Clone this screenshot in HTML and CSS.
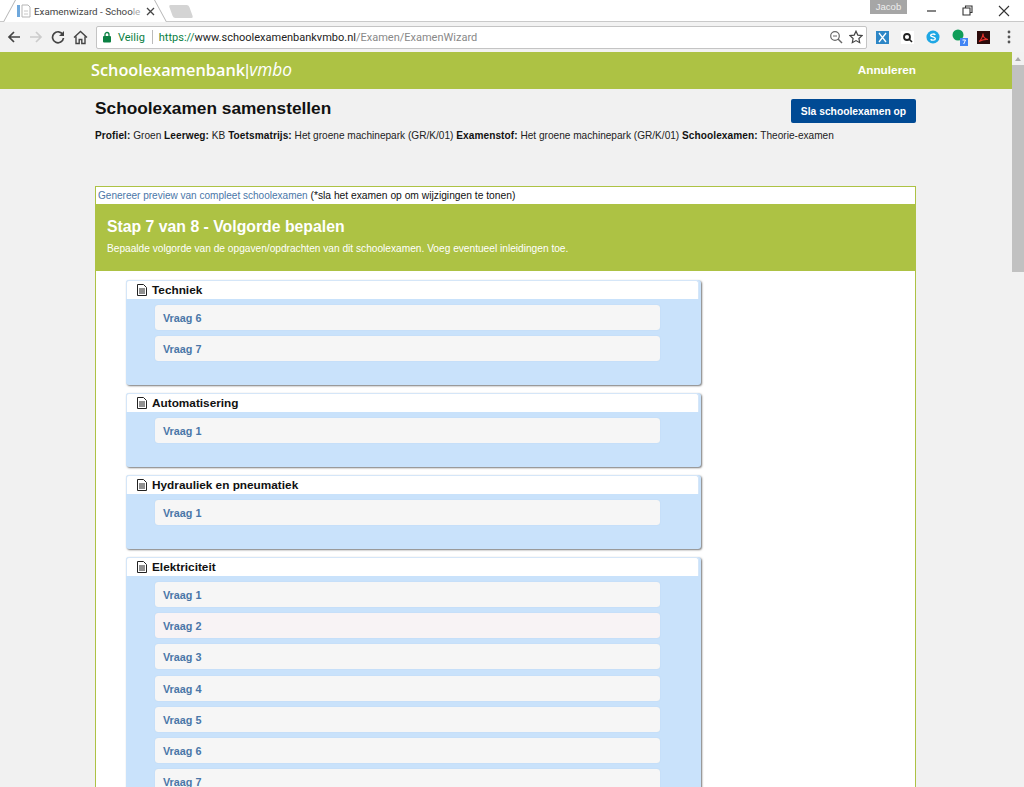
FILE: index.html
```html
<!DOCTYPE html>
<html lang="en">
<head>
<meta charset="UTF-8">
<title>Examenwizard - Schoolexamenbank</title>
<link rel="stylesheet" href="styles.css">
</head>
<body>

<div class="titlebar">
    <div class="tab">
        <svg class="tab-icon" width="14" height="16" viewBox="0 0 14 16"><rect x="0" y="2" width="3" height="12" fill="#6fa8dc"/><path d="M5 2h6l2 2v10H5z" fill="#fff" stroke="#b5b5b5"/><path d="M7 8h4M7 11h4" stroke="#c8c8c8"/></svg>
        <span class="tab-title">Examenwizard - Schoo<span class="tab-fade">le</span></span>
        <svg class="tab-close" width="9" height="9" viewBox="0 0 9 9"><path d="M1 1l7 7M8 1l-7 7" stroke="#444" stroke-width="1.3"/></svg>
    </div>
    <div class="new-tab"></div>
    <div class="spacer"></div>
    <div class="user-badge">Jacob</div>
    <div class="win-controls">
        <svg width="11" height="11" viewBox="0 0 11 11"><path d="M1 6h9" stroke="#333" stroke-width="1.2"/></svg>
        <svg width="11" height="11" viewBox="0 0 11 11"><path d="M3.5 2.5V1h6.5v6.5H8.500M1 3h7v7H1z" fill="none" stroke="#333" stroke-width="1.1"/></svg>
        <svg width="12" height="12" viewBox="0 0 12 12"><path d="M1 1l10 10M11 1L1 11" stroke="#333" stroke-width="1.1"/></svg>
    </div>
</div>

<div class="toolbar">
    <svg class="nav-btn" width="14" height="14" viewBox="0 0 14 14"><path d="M13 7H2M7 2L2 7l5 5" fill="none" stroke="#444" stroke-width="1.7"/></svg>
    <svg class="nav-btn" width="14" height="14" viewBox="0 0 14 14"><path d="M1 7h11M7 2l5 5-5 5" fill="none" stroke="#ccc" stroke-width="1.7"/></svg>
    <svg class="nav-btn" width="14" height="14" viewBox="0 0 14 14"><path d="M11.800 4.500A5.500 5.500 0 1 0 12.500 8" fill="none" stroke="#444" stroke-width="1.7"/><path d="M13 1v5H8z" fill="#444"/></svg>
    <svg class="nav-btn" width="15" height="15" viewBox="0 0 15 15"><path d="M1 7.500L7.500 1.500 14 7.500M3 6.500V13.500h3.200V9.500h2.600v4H12V6.500" fill="none" stroke="#444" stroke-width="1.4"/></svg>
    <div class="omnibox">
        <svg width="10" height="12" viewBox="0 0 10 12"><rect x="1" y="5" width="8" height="6.500" rx="1" fill="#0b8043"/><path d="M3 5V3.500a2 2 0 0 1 4 0V5" fill="none" stroke="#0b8043" stroke-width="1.300"/></svg>
        <span class="secure">Veilig</span>
        <span class="omni-sep"></span>
        <span class="url"><span class="url-scheme">https://</span>www.schoolexamenbankvmbo.nl<span class="url-path">/Examen/ExamenWizard</span></span>
        <span class="spacer"></span>
        <svg width="14" height="14" viewBox="0 0 14 14"><circle cx="6" cy="6" r="4.300" fill="none" stroke="#666" stroke-width="1.200"/><path d="M9 9l4 4" stroke="#666" stroke-width="1.500"/><path d="M4 6h4" stroke="#666"/></svg>
        <svg width="14" height="14" viewBox="0 0 14 14"><path d="M7 1.200l1.800 3.900 4.200.5-3.100 2.900.8 4.200L7 10.600l-3.700 2.100.8-4.200L1 5.600l4.200-.5z" fill="none" stroke="#444" stroke-width="1.200"/></svg>
    </div>
    <div class="extensions">
        <svg width="13" height="13" viewBox="0 0 13 13"><rect width="13" height="13" fill="#2d86c6"/><path d="M3 2l3.500 4.500L3 11M10 2L6.500 6.500 10 11" fill="none" stroke="#fff" stroke-width="1.300"/></svg>
        <svg width="13" height="13" viewBox="0 0 13 13"><rect width="13" height="13" fill="#fff"/><circle cx="6" cy="6" r="3" fill="none" stroke="#222" stroke-width="1.800"/><path d="M8 8l3 3" stroke="#222" stroke-width="1.600"/></svg>
        <svg width="14" height="14" viewBox="0 0 15 15"><circle cx="7.500" cy="7.500" r="7" fill="#1ea7e4"/><path d="M10 5.200C9 4 5 4 5 5.800s5 1.500 5 3.500-4 2-5 .6" fill="none" stroke="#fff" stroke-width="1.500"/></svg>
        <svg class="ext-badge" width="17" height="17" viewBox="0 0 17 17"><circle cx="6" cy="6" r="5.500" fill="#0f9d58"/><rect x="8" y="9" width="8" height="8" fill="#4285f4"/><path d="M10.500 11h3l-1.800 4" fill="none" stroke="#fff"/></svg>
        <svg class="ext-pdf" width="13" height="13" viewBox="0 0 13 13"><rect width="13" height="13" fill="#2b0b0b"/><path d="M2 10.500C4 9.500 6 5 6 2.500c0 3 2 5.500 5 6-2.500-.3-6 .5-9 2z" fill="none" stroke="#e8302a" stroke-width="1.100"/></svg>
        <svg width="4" height="14" viewBox="0 0 4 14"><circle cx="2" cy="2" r="1.400" fill="#555"/><circle cx="2" cy="7" r="1.400" fill="#555"/><circle cx="2" cy="12" r="1.400" fill="#555"/></svg>
    </div>
</div>

<div class="viewport">
    <div class="page">
        <div class="topbar">
            <div class="logo">Schoolexamenbank<span class="logo-sep">|</span><em>vmbo</em></div>
            <a class="cancel">Annuleren</a>
        </div>

        <div class="content">
            <div class="page-head">
                <h1>Schoolexamen samenstellen</h1>
                <button class="save-btn">Sla schoolexamen op</button>
            </div>
            <p class="meta"><b>Profiel:</b> Groen <b>Leerweg:</b> KB <b>Toetsmatrijs:</b> Het groene machinepark (GR/K/01) <b>Examenstof:</b> Het groene machinepark (GR/K/01) <b>Schoolexamen:</b> Theorie-examen</p>

            <div class="wizard">
                <div class="preview-row"><a>Genereer preview van compleet schoolexamen</a> (*sla het examen op om wijzigingen te tonen)</div>
                <div class="step-head">
                    <h2>Stap 7 van 8 - Volgorde bepalen</h2>
                    <p>Bepaalde volgorde van de opgaven/opdrachten van dit schoolexamen. Voeg eventueel inleidingen toe.</p>
                </div>
                <div class="sections">
                    <div class="section">
                        <div class="section-title"><svg class="doc" width="10" height="12" viewBox="0 0 10 12"><path d="M.5.500h6l3 3v8H.5z" fill="#fff" stroke="#222"/><path d="M2 5h6M2 7h6M2 9h6" stroke="#222"/></svg>Techniek</div>
                        <div class="item">Vraag 6</div>
                        <div class="item">Vraag 7</div>
                    </div>
                    <div class="section">
                        <div class="section-title"><svg class="doc" width="10" height="12" viewBox="0 0 10 12"><path d="M.5.500h6l3 3v8H.5z" fill="#fff" stroke="#222"/><path d="M2 5h6M2 7h6M2 9h6" stroke="#222"/></svg>Automatisering</div>
                        <div class="item">Vraag 1</div>
                    </div>
                    <div class="section">
                        <div class="section-title"><svg class="doc" width="10" height="12" viewBox="0 0 10 12"><path d="M.5.500h6l3 3v8H.5z" fill="#fff" stroke="#222"/><path d="M2 5h6M2 7h6M2 9h6" stroke="#222"/></svg>Hydrauliek en pneumatiek</div>
                        <div class="item">Vraag 1</div>
                    </div>
                    <div class="section">
                        <div class="section-title"><svg class="doc" width="10" height="12" viewBox="0 0 10 12"><path d="M.5.500h6l3 3v8H.5z" fill="#fff" stroke="#222"/><path d="M2 5h6M2 7h6M2 9h6" stroke="#222"/></svg>Elektriciteit</div>
                        <div class="item">Vraag 1</div>
                        <div class="item item-pink">Vraag 2</div>
                        <div class="item">Vraag 3</div>
                        <div class="item">Vraag 4</div>
                        <div class="item">Vraag 5</div>
                        <div class="item">Vraag 6</div>
                        <div class="item">Vraag 7</div>
                    </div>
                </div>
            </div>
        </div>
    </div>
    <div class="scrollbar">
        <div class="scroll-arrow"></div>
        <div class="scroll-thumb"></div>
    </div>
</div>

</body>
</html>
```

FILE: styles.css
```css
html, body {
    margin: 0;
    padding: 0;
    height: 787px;
    overflow: hidden;
}

body {
    font-family: "Liberation Sans", Arial, sans-serif;
    display: flex;
    flex-direction: column;
    background-color: #f1f1f1;
}

.spacer {
    flex: 1;
}

/* browser chrome */
.titlebar {
    height: 22px;
    display: flex;
    background-color: #fff;
    border-bottom: 1px solid #c9c9c9;
    box-sizing: border-box;
    flex-shrink: 0;
}

.tab {
    position: relative;
    width: 146px;
    height: 22px;
    margin-left: 12px;
    display: flex;
    align-items: center;
    padding-left: 5px;
    box-sizing: border-box;
    font-size: 9.800px;
    font-family: Roboto, sans-serif;
    color: #444;
    background-color: #fff;
    flex-shrink: 0;
}

.tab::before,
.tab::after {
    content: "";
    position: absolute;
    top: 0;
    bottom: 0;
    width: 12px;
    background-color: #fff;
    border-left: 1px solid #b5b5b5;
}

.tab::before {
    left: -3px;
    transform: skewX(-28.6deg);
}

.tab::after {
    right: -3px;
    transform: skewX(28.6deg);
    border-left: none;
    border-right: 1px solid #b5b5b5;
}

.tab-icon {
    margin-right: 3px;
    flex-shrink: 0;
    position: relative;
    z-index: 1;
}

.tab-title {
    width: 108px;
    white-space: nowrap;
    position: relative;
    z-index: 1;
}

.tab-fade {
    color: #aaa;
}

.tab-close {
    margin-left: 4px;
    position: relative;
    z-index: 1;
}

.new-tab {
    width: 20px;
    height: 13px;
    margin: 5px 0 0 13px;
    background-color: #d4d4d4;
    transform: skewX(20deg);
    border-radius: 2px;
}

.user-badge {
    width: 37px;
    height: 14px;
    background-color: #a6a6a6;
    color: #eee;
    font-size: 9.500px;
    text-align: center;
    line-height: 13px;
}

.win-controls {
    width: 117px;
    display: flex;
    justify-content: space-between;
    align-items: flex-start;
    padding: 5px 14px 0 19px;
    box-sizing: border-box;
}

.toolbar {
    height: 30px;
    display: flex;
    align-items: center;
    background-color: #f2f2f2;
    box-sizing: border-box;
    padding-left: 7px;
    flex-shrink: 0;
}

.nav-btn {
    margin-right: 8px;
}

.omnibox {
    width: 771px;
    height: 23px;
    display: flex;
    align-items: center;
    gap: 6px;
    padding: 0 3px 0 5px;
    box-sizing: border-box;
    background-color: #fff;
    border: 1px solid #c4c4c4;
    border-radius: 2px;
    font-size: 11px;
    font-family: Roboto, sans-serif;
    flex-shrink: 0;
}

.secure {
    color: #0b8043;
    margin-right: 1px;
}

.omni-sep {
    width: 1px;
    height: 14px;
    background-color: #bbb;
}

.url {
    color: #222;
}

.url-scheme {
    color: #0b8043;
}

.url-path {
    color: #888;
}

.extensions {
    flex: 1;
    display: flex;
    align-items: center;
    gap: 12px;
    padding-left: 9px;
}

.ext-badge {
    margin-right: -4px;
}

.ext-pdf {
    margin-right: 5px;
}

/* page */
.viewport {
    flex: 1;
    display: flex;
    min-height: 0;
}

.page {
    flex: 1;
    overflow: hidden;
}

.topbar {
    height: 37px;
    background-color: #adc244;
    display: flex;
    align-items: center;
    justify-content: space-between;
    padding: 0 96px 2px 91px;
    color: #fff;
    box-sizing: border-box;
}

.logo {
    font-family: "Open Sans", sans-serif;
    font-weight: 600;
    font-size: 16.300px;
}

.logo-sep {
    font-family: "Liberation Sans", sans-serif;
    font-weight: 400;
}

.logo em {
    font-weight: 400;
    font-size: 17.300px;
}

.cancel {
    font-size: 11.800px;
    font-weight: bold;
}

.content {
    width: 821px;
    margin-left: 95px;
    padding-bottom: 20px;
}

.page-head {
    display: flex;
    justify-content: space-between;
    align-items: flex-start;
    padding-top: 10px;
}

h1 {
    font-size: 17.300px;
    margin: 0;
    color: #111;
    line-height: 18px;
}

.save-btn {
    width: 125px;
    height: 24px;
    padding: 0;
    background-color: #004a94;
    color: #fff;
    border: none;
    border-radius: 2px;
    font-family: inherit;
    font-size: 10.300px;
    font-weight: bold;
    cursor: pointer;
}

.meta {
    font-size: 10.100px;
    margin: 6px 0 44px;
    line-height: 13px;
    color: #222;
}

.meta b {
    color: #111;
    letter-spacing: 0.08px;
}

.wizard {
    background-color: #fff;
    border: 1px solid #adc244;
    border-bottom: none;
}

.preview-row {
    height: 17px;
    padding-left: 2px;
    font-size: 10.280px;
    line-height: 17px;
    color: #111;
}

.preview-row a {
    color: #4a76a8;
    font-size: 10.040px;
}

.step-head {
    height: 67px;
    background-color: #adc244;
    color: #fff;
    padding: 14px 11px 0;
    box-sizing: border-box;
}

h2 {
    font-size: 15.800px;
    line-height: 18px;
    margin: 0 0 6px;
}

.step-head p {
    font-size: 10.160px;
    line-height: 13px;
    margin: 0;
}

.sections {
    padding: 9px 0 0 30px;
}

.section {
    width: 575px;
    margin-bottom: 8px;
    padding-bottom: 18px;
    background-color: #c9e2fb;
    border-radius: 3px;
    box-shadow: 1px 1px 2px #777;
}

.section-title {
    height: 19px;
    margin-bottom: 6px;
    margin-right: 2px;
    display: flex;
    align-items: center;
    padding: 0 0 1px 10px;
    box-sizing: border-box;
    background-color: #fff;
    border: 1px solid #d5e6f8;
    border-bottom: none;
    border-radius: 3px 3px 0 0;
    font-size: 11.800px;
    font-weight: bold;
    color: #111;
}

.doc {
    margin-right: 5px;
}

.item {
    width: 505px;
    height: 25px;
    margin: 0 0 6.170px 29px;
    padding: 1px 0 0 8px;
    box-sizing: border-box;
    background-color: #f6f6f6;
    border-radius: 3px;
    box-shadow: 0 0 1px #aac8e6;
    font-size: 10.800px;
    font-weight: bold;
    line-height: 25px;
    color: #4a76a8;
}

.item:last-child {
    margin-bottom: 6px;
}

.item-pink {
    background-color: #f8f3f5;
}

.scrollbar {
    width: 12px;
    background-color: #f1f1f1;
    flex-shrink: 0;
}

.scroll-arrow {
    width: 0;
    height: 0;
    margin: 5px auto 0;
    border-left: 3px solid transparent;
    border-right: 3px solid transparent;
    border-bottom: 4px solid #a8a8a8;
}

.scroll-thumb {
    height: 207px;
    margin-top: 4px;
    background-color: #c1c1c1;
}
```
